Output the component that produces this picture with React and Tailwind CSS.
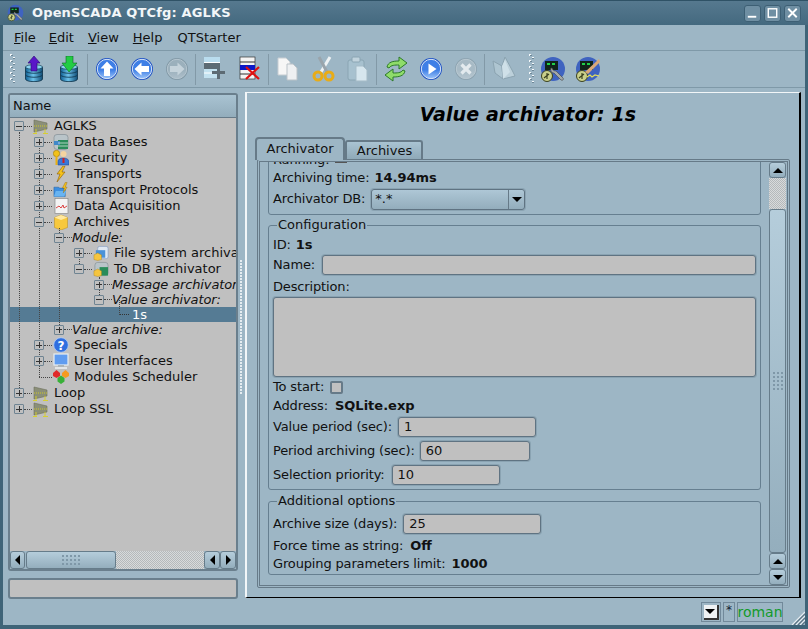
import React from "react";

const Grip = ({ cls = "" }) => (
  <svg width="6" height="30" viewBox="0 0 6 30" className={cls}>
    {Array.from({ length: 10 }).map((_, i) => (
      <g key={i}>
        <rect x={i % 2 ? 3 : 0} y={i * 3} width="2" height="2" fill="#f4f8fa" />
        <rect x={i % 2 ? 3 : 1} y={i * 3 + 1} width="2" height="1" fill="#6d8797" />
      </g>
    ))}
  </svg>
);

const Db = ({ id, top, children }) => (
  <svg width="20" height="26" viewBox="0 0 20 26">
    <defs>
      <linearGradient id={id} x1="0" x2="1" y1="0" y2="0">
        <stop offset="0" stopColor="#0f5f92" />
        <stop offset="0.45" stopColor="#6cc2ea" />
        <stop offset="1" stopColor="#104e78" />
      </linearGradient>
    </defs>
    <path d={`M1.5 ${top}v${23 - top}c0 3.5 17 3.5 17 0V${top}z`} fill={`url(#${id})`} stroke="#0d3147" strokeWidth="0.8" />
    <path d={`M1.5 ${top + 4}c2 3 15 3 17 0M1.5 ${top + 8}c2 3 15 3 17 0`} fill="none" stroke="#0d3147" strokeWidth="0.8" />
    <path d={`M1.5 ${top}c0-3 17-3 17 0s-17 3-17 0z`} fill="#8ad2f0" stroke="#0d3147" strokeWidth="0.6" />
    {children}
  </svg>
);

const Round = ({ id, c0 = "#9cc4f8", c1 = "#3f7fe6", c2 = "#1f52c4", ring = "#d8e6f8", children }) => (
  <svg width="24" height="24" viewBox="0 0 24 24">
    <defs>
      <linearGradient id={id} x1="0" x2="0" y1="0" y2="1">
        <stop offset="0" stopColor={c1} />
        <stop offset="0.55" stopColor={c1} />
        <stop offset="1" stopColor={c0} />
      </linearGradient>
    </defs>
    <circle cx="12" cy="12" r="11" fill={c2} />
    <circle cx="12" cy="12" r="9.7" fill={`url(#${id})`} stroke={ring} strokeWidth="1" />
    {children}
  </svg>
);

const Logo = ({ pencil, size = 26 }) => (
  <svg width={size} height={size + 1} viewBox="0 0 26 27">
    <circle cx="13" cy="13" r="12" fill="#3f63c0" />
    <rect x="5" y="5" width="13" height="9" fill="#10241a" />
    <path d="M7 7h3v2H7zM12 7h3v2h-3z" fill="#1fd04a" />
    <circle cx="7" cy="20" r="5.5" fill="#c9cf8a" stroke="#39401f" />
    <path d="M4 22l5-4M7 17v6" stroke="#39401f" strokeWidth="1.2" />
    {pencil ? (
      <>
        <path d="M10 16L24 3l1 3-12 12z" fill="#d9a878" />
        <path d="M12 21l3-2 2 2 3-2 4 1" stroke="#e6e05a" strokeWidth="1.2" fill="none" />
      </>
    ) : (
      <path d="M12 12c1 3 3 3 4 3l7 7c1 1 0 3-2 2l-7-7c-2 0-4-2-3-5z" fill="#a4a8a8" stroke="#444" strokeWidth="0.6" />
    )}
  </svg>
);

const toolbarGroups = [
  [
    <Db id="dba" top={11}><path d="M10 0l6 7h-3v8H7V7H4z" fill="#5a16c8" stroke="#2a0a70" strokeWidth="0.6" /></Db>,
    <Db id="dbb" top={11}><path d="M10 16L3 7h4V0h7v7h4z" fill="#22cc44" stroke="#0f6a25" strokeWidth="0.6" /></Db>,
  ],
  [
    <Round id="r1"><path d="M12 4.5l6.5 7H15v7.5H9v-7.5H5.5z" fill="#fff" /></Round>,
    <Round id="r2"><path d="M4.5 12l7-6.5V9H19v6h-7.5v3.5z" fill="#fff" /></Round>,
    <Round id="r3" c0="#aebfca" c1="#9bb0bc" c2="#8299a6" ring="#b5c6d0"><path d="M19.5 12l-7-6.5V9H5v6h7.5v3.5z" fill="#c5d3db" /></Round>,
  ],
  [
    <svg width="22" height="26" viewBox="0 0 22 26">
      <rect x="0" y="1" width="16" height="5" fill="#b9dcee" />
      <rect x="0" y="6" width="16" height="1" fill="#fff" />
      <rect x="0" y="7" width="16" height="6" fill="#5d6b74" />
      <rect x="0" y="13" width="16" height="9" fill="#c3e2f0" />
      <path d="M0 17h16" stroke="#fff" />
      <path d="M8 15h13v3H8z" fill="#5d6b74" />
      <path d="M13 10h3v13h-3z" fill="#5d6b74" />
    </svg>,
    <svg width="22" height="26" viewBox="0 0 22 26">
      <rect x="1" y="1" width="15" height="22" fill="#f4f4f4" stroke="#333" strokeWidth="0.7" />
      <path d="M1 6h15" stroke="#333" />
      <rect x="1" y="9" width="15" height="5" fill="#0b18c8" />
      <path d="M1 18h15" stroke="#333" />
      <path d="M7 11l13 12M20 11L7 23" stroke="#e01010" strokeWidth="2.2" />
    </svg>,
  ],
  [
    <svg width="24" height="26" viewBox="0 0 24 26">
      <path d="M2 2h8l4 4v13H2z" fill="#f6f6f6" stroke="#c6cdd2" />
      <path d="M11 8h6l4 4v12H11z" fill="#eef0f2" stroke="#bac2c8" />
    </svg>,
    <svg width="24" height="28" viewBox="0 0 24 28">
      <path d="M19 2L10 17" stroke="#eef2f4" strokeWidth="3" />
      <path d="M8 2l8 15" stroke="#9aa4ab" strokeWidth="3" />
      <circle cx="7" cy="21" r="4" fill="none" stroke="#e8ac18" strokeWidth="3" />
      <circle cx="18" cy="21" r="4" fill="none" stroke="#e8ac18" strokeWidth="3" />
    </svg>,
    <svg width="24" height="28" viewBox="0 0 24 28">
      <rect x="2" y="5" width="16" height="20" rx="2" fill="#a7c1cf" stroke="#8aa5b3" />
      <rect x="6" y="2" width="8" height="5" rx="1" fill="#c1d3dd" stroke="#8aa5b3" />
      <path d="M10 11h7l4 4v11H10z" fill="#d6e6ee" stroke="#a5bbc7" />
    </svg>,
  ],
  [
    <svg width="28" height="28" viewBox="0 0 28 28">
      <path d="M5 12c1-5 6-6 12-6V2l8 6-8 6v-4c-4 0-8 0-10 3z" fill="#8fdc6a" stroke="#2d7a2a" />
      <path d="M23 16c-1 5-6 6-12 6v4l-8-6 8-6v4c4 0 8 0 10-3z" fill="#8fdc6a" stroke="#2d7a2a" />
    </svg>,
    <Round id="r4"><path d="M9.5 6.5l8 5.5-8 5.5z" fill="#fff" /></Round>,
    <Round id="r5" c0="#b6c6d0" c1="#a7bac5" c2="#8da3b0" ring="#b9c9d2"><path d="M7.5 7.5l9 9M16.5 7.5l-9 9" stroke="#e3eaee" strokeWidth="3.2" /></Round>,
  ],
  [
    <svg width="26" height="26" viewBox="0 0 26 26">
      <path d="M2 5l9 5 1 13-8-6z" fill="#aec5d1" stroke="#8ba3b0" />
      <path d="M11 10l3-9 7 13 3 6-12 3z" fill="#bcd0da" stroke="#8ba3b0" />
      <path d="M11 10l3-6 5 12-7 7z" fill="#cfe0e8" />
    </svg>,
  ],
];

function Btn({ children }) {
  return <div className="flex h-[36px] w-[35px] shrink-0 items-center justify-center">{children}</div>;
}

function Toolbar() {
  return (
    <div className="flex h-[38px] items-center border-y border-[#7f99a8] pl-[7px]">
      <Grip cls="shrink-0" />
      {toolbarGroups.map((g, i) => (
        <React.Fragment key={i}>
          {g.map((ic, j) => (
            <Btn key={j}>{ic}</Btn>
          ))}
          {i < toolbarGroups.length - 1 && <div className="mx-px h-[31px] w-px shrink-0 bg-[#8299a7]" />}
        </React.Fragment>
      ))}
      <Grip cls="ml-[8px] shrink-0" />
      <Btn><Logo /></Btn>
      <Btn><Logo pencil /></Btn>
    </div>
  );
}

const small = {
  chip: (
    <svg width="16" height="16" viewBox="0 0 16 16">
      <path d="M1 2l13 3v6L1 14z" fill="#8b8f78" stroke="#6d705c" strokeWidth="0.6" />
      <path d="M1 8h14" stroke="#d8d020" strokeWidth="0.9" strokeDasharray="1 1" />
      <path d="M0 15.5h4M10 15.5h5M3 11v4M12 11v4" stroke="#d8d020" strokeWidth="0.9" />
    </svg>
  ),
  db: (
    <svg width="16" height="16" viewBox="0 0 16 16">
      <rect x="1" y="0.5" width="14" height="15" rx="3" fill="#b9c4c9" stroke="#7b878d" strokeWidth="0.6" />
      <rect x="5" y="6" width="10" height="9" fill="#2a8c5a" />
      <rect x="1" y="7" width="6" height="4" fill="#3f88c8" />
      <path d="M5 9h10M5 12h10" stroke="#e6f0ec" strokeWidth="0.7" />
    </svg>
  ),
  sec: (
    <svg width="16" height="16" viewBox="0 0 16 16">
      <circle cx="3.5" cy="3.5" r="3.2" fill="#f2c11a" stroke="#8a6a08" strokeWidth="0.5" />
      <path d="M2.5 6v9h2V6z" fill="#e8b010" />
      <circle cx="10.5" cy="4" r="3" fill="#f4d4a0" />
      <path d="M5 15v-3c0-3 2-4 5-4s6 1 6 4v3z" fill="#3878d8" stroke="#1c3c80" strokeWidth="0.5" />
      <path d="M9.5 8h2v5h-2z" fill="#d02020" />
    </svg>
  ),
  bolt: (
    <svg width="16" height="16" viewBox="0 0 16 16">
      <path d="M10 0L4 8h3l-3 8 8-10H9l3-6z" fill="#f5c21b" stroke="#8a5a08" strokeWidth="0.6" />
    </svg>
  ),
  folder: (
    <svg width="17" height="16" viewBox="0 0 17 16">
      <path d="M1 5h5l1 1h6v9H1z" fill="#3d8fe0" stroke="#1b5a9c" strokeWidth="0.5" />
      <path d="M1 15l2-6h11l-2 6z" fill="#68b4f2" />
      <path d="M13 0l-3 6h2l-1 5 4-6h-2l2-5z" fill="#f5c21b" stroke="#8a5a08" strokeWidth="0.4" />
    </svg>
  ),
  chart: (
    <svg width="15" height="16" viewBox="0 0 15 16">
      <rect x="1" y="0.5" width="13" height="15" fill="#f3f3f3" stroke="#8a8a8a" strokeWidth="0.7" />
      <path d="M2 10l3-2 2 2 2-3 1 3 3-2" fill="none" stroke="#d83030" strokeWidth="0.9" />
    </svg>
  ),
  box: (
    <svg width="16" height="16" viewBox="0 0 16 16">
      <path d="M1.5 3.5L8 1l6.5 2.5v10L8 16l-6.5-2.5z" fill="#f7c83c" stroke="#b68a18" strokeWidth="0.5" />
      <path d="M1.5 3.5L8 6l6.5-2.5L8 1z" fill="#ffe8a0" />
    </svg>
  ),
  file: (
    <svg width="17" height="16" viewBox="0 0 17 16">
      <rect x="5" y="1" width="11" height="13" rx="2" fill="#dfe8f2" stroke="#6a8cc0" strokeWidth="0.5" />
      <rect x="3" y="5" width="10" height="8" fill="#4a92d8" />
      <path d="M1 10l4-2 4 2v5l-4 1-4-1z" fill="#f5c540" stroke="#a87d14" strokeWidth="0.4" />
    </svg>
  ),
  toDb: (
    <svg width="17" height="16" viewBox="0 0 17 16">
      <rect x="2" y="1" width="14" height="14" rx="3" fill="#b9c4c9" stroke="#7b878d" strokeWidth="0.6" />
      <rect x="7" y="6" width="9" height="9" fill="#2a8c5a" />
      <path d="M1 10l4-2 4 2v5l-4 1-4-1z" fill="#f5c540" stroke="#a87d14" strokeWidth="0.4" />
    </svg>
  ),
  help: (
    <svg width="16" height="16" viewBox="0 0 16 16">
      <circle cx="8" cy="8" r="7.3" fill="#2f6fe0" stroke="#b8d0f5" strokeWidth="0.8" />
      <text x="8" y="12.5" textAnchor="middle" fontSize="12" fontWeight="700" fill="#fff" fontFamily="DejaVu Sans">?</text>
    </svg>
  ),
  ui: (
    <svg width="16" height="17" viewBox="0 0 16 17">
      <rect x="1" y="1" width="14" height="11" fill="#5f9cf0" stroke="#e8eef2" strokeWidth="1.2" />
      <rect x="5" y="12" width="6" height="2" fill="#aab4ba" />
      <rect x="2" y="14" width="12" height="2" fill="#e3e6e8" />
    </svg>
  ),
  sched: (
    <svg width="16" height="14" viewBox="0 0 16 14">
      <path d="M0 3l3.5-3L7 3v3L3.5 8 0 6z" fill="#e02a2a" />
      <path d="M9 3l3.5-3L16 3v3l-3.5 2L9 6z" fill="#f59a20" />
      <path d="M4.5 8L8 5.5 11.5 8v3.5L8 14l-3.500-2.500z" fill="#38b038" />
    </svg>
  ),
};

const rows = [
  { box: "-", pad: "pl-[4px]", h: "h-[16px]", icon: small.chip, t: "AGLKS" },
  { box: "+", pad: "pl-[24px]", h: "h-[16px]", icon: small.db, t: "Data Bases" },
  { box: "+", pad: "pl-[24px]", h: "h-[16px]", icon: small.sec, t: "Security" },
  { box: "+", pad: "pl-[24px]", h: "h-[16px]", icon: small.bolt, t: "Transports" },
  { box: "+", pad: "pl-[24px]", h: "h-[16px]", icon: small.folder, t: "Transport Protocols" },
  { box: "+", pad: "pl-[24px]", h: "h-[16px]", icon: small.chart, t: "Data Acquisition" },
  { box: "-", pad: "pl-[24px]", h: "h-[16px]", icon: small.box, t: "Archives" },
  { box: "-", pad: "pl-[44px]", h: "h-[15px]", t: "Module:", it: true },
  { box: "+", pad: "pl-[64px]", h: "h-[16px]", icon: small.file, t: "File system archivator" },
  { box: "-", pad: "pl-[64px]", h: "h-[16px]", icon: small.toDb, t: "To DB archivator" },
  { box: "+", pad: "pl-[84px]", h: "h-[15px]", t: "Message archivator:", it: true },
  { box: "-", pad: "pl-[84px]", h: "h-[15px]", t: "Value archivator:", it: true },
  { box: "", pad: "pl-[104px]", h: "h-[15px]", t: "1s", sel: true },
  { box: "+", pad: "pl-[44px]", h: "h-[15px]", t: "Value archive:", it: true },
  { box: "+", pad: "pl-[24px]", h: "h-[16px]", icon: small.help, t: "Specials" },
  { box: "+", pad: "pl-[24px]", h: "h-[16px]", icon: small.ui, t: "User Interfaces" },
  { box: "", pad: "pl-[24px]", h: "h-[16px]", icon: small.sched, t: "Modules Scheduler" },
  { box: "+", pad: "pl-[4px]", h: "h-[16px]", icon: small.chip, t: "Loop" },
  { box: "+", pad: "pl-[4px]", h: "h-[16px]", icon: small.chip, t: "Loop SSL" },
];

function Expander({ kind }) {
  return (
    <div className="relative z-10 flex h-[10px] w-[10px] shrink-0 items-center justify-center rounded-[1px] border border-[#6f8492] bg-[#c0c0c0]">
      <div className="absolute h-px w-[6px] bg-[#333]" />
      {kind === "+" && <div className="absolute h-[6px] w-px bg-[#333]" />}
    </div>
  );
}

function TreeRow({ r }) {
  return (
    <div className={`flex items-center whitespace-nowrap ${r.h} ${r.pad} ${r.sel ? "bg-[#557b94] text-white" : "text-[#111]"}`}>
      {r.box ? <Expander kind={r.box} /> : <div className="w-[10px] shrink-0" />}
      {r.sel ? (
        <div className="ml-[-5px] mr-[3px] h-0 w-[10px] shrink-0 border-t border-dotted border-[#333]" />
      ) : (
        <div className={`${r.box ? "w-[8px]" : "ml-[-5px] w-[13px]"} h-0 shrink-0 border-t border-dotted border-[#444]`} />
      )}
      {r.icon && <div className="ml-px mr-[5px] flex w-[16px] shrink-0 justify-center">{r.icon}</div>}
      <span className={r.it ? "italic tracking-[-0.12px]" : ""}>{r.t}</span>
    </div>
  );
}

const Guide = ({ cls }) => <div className={`absolute w-0 border-l border-dotted border-[#444] ${cls}`} />;

const ArrowL = () => <div className="h-0 w-0 border-y-[5px] border-r-[5px] border-y-transparent border-r-black" />;
const ArrowR = () => <div className="h-0 w-0 border-y-[5px] border-l-[5px] border-y-transparent border-l-black" />;
const ArrowU = () => <div className="h-0 w-0 border-x-[5px] border-b-[5px] border-x-transparent border-b-black" />;
const ArrowD = () => <div className="h-0 w-0 border-x-[5px] border-t-[5px] border-x-transparent border-t-black" />;

const sbBtn = "flex items-center justify-center rounded-[3px] border border-[#667c8a] bg-gradient-to-b from-[#b5cddb] to-[#94aebd]";
const dither = "bg-[repeating-conic-gradient(#b4b9bb_0_25%,#d8dadb_0_50%)] bg-[length:2px_2px]";

function Dots({ cols, rows: n }) {
  return (
    <div className="grid gap-[2px]" style={{ gridTemplateColumns: `repeat(${cols}, 2px)` }}>
      {Array.from({ length: cols * n }).map((_, i) => (
        <div key={i} className="h-[2px] w-[2px] bg-[#7f98a8]" />
      ))}
    </div>
  );
}

function LeftPanel() {
  return (
    <div className="flex w-[230px] shrink-0 flex-col">
      <div className="flex h-[478px] flex-col overflow-hidden rounded-[3px] border-2 border-[#6a7f8d] bg-[#c0c0c0]">
        <div className="flex h-[23px] shrink-0 items-center border-b border-[#667a88] bg-gradient-to-b from-[#a9c3d2] to-[#93adbc] pl-[3px] text-[#111]">
          Name
        </div>
        <div className="relative flex-1 overflow-hidden">
          <Guide cls="left-[9px] top-[14px] h-[260px]" />
          <Guide cls="left-[29px] top-[30px] h-[229px]" />
          <Guide cls="left-[49px] top-[110px] h-[101px]" />
          <Guide cls="left-[69px] top-[135px] h-[17px]" />
          <Guide cls="left-[89px] top-[159px] h-[22px]" />
          <Guide cls="left-[109px] top-[182px] h-[15px] z-10" />
          {rows.map((r, i) => (
            <TreeRow key={i} r={r} />
          ))}
        </div>
        <div className="flex h-[18px] shrink-0 items-stretch bg-[#9db6c5]">
          <div className={`${sbBtn} w-[15px]`}><ArrowL /></div>
          <div className={`${sbBtn} ml-px w-[90px]`}><Dots cols={5} rows={3} /></div>
          <div className={`flex-1 ${dither}`} />
          <div className={`${sbBtn} w-[16px]`}><ArrowL /></div>
          <div className={`${sbBtn} w-[16px]`}><ArrowR /></div>
        </div>
      </div>
      <div className="mt-[7px] h-[21px] rounded-[3px] border-2 border-[#6a7f8d] bg-[#c0c0c0]" />
    </div>
  );
}

const inputCls = "flex items-center rounded-[3px] border border-[#5f7382] shadow-[0_0_0_1px_#8aa3b2] bg-[#c0c0c0] pl-[5px] text-[#111] tracking-normal";
const L = ({ children, cls = "" }) => <div className={`flex h-[18px] items-center whitespace-nowrap ${cls}`}>{children}</div>;
const B = ({ cls, children }) => <b className={`tracking-normal ${cls}`}>{children}</b>;

function Field({ label, value, w, ml, cls = "" }) {
  return (
    <div className={`flex h-[20px] items-center whitespace-nowrap ${cls}`}>
      <span>{label}</span>
      <div className={`${inputCls} h-[20px] ${w} ${ml}`}>{value}</div>
    </div>
  );
}

function Group({ title, cls, children }) {
  return (
    <div className={`relative rounded-[3px] border border-[#667f90] px-[4px] ${cls}`}>
      <div className="absolute -top-[9px] left-[8px] flex h-[16px] items-center bg-[#9db6c5] px-px tracking-normal">{title}</div>
      {children}
    </div>
  );
}

function RightPanel() {
  return (
    <div className="ml-[7px] flex h-[506px] w-[556px] flex-col border-y border-x-2 border-t-[#f2f6f8] border-l-[#f2f6f8] border-b-black border-r-black">
      <div className="flex h-[43px] shrink-0 items-center justify-center pl-[10px] text-[19px] font-bold italic tracking-[0.1px] text-black">Value archivator: 1s</div>
      <div className="relative z-10 flex h-[23px] shrink-0 items-end pl-[8px]">
        <div className="-mb-px flex h-[23px] w-[90px] items-center justify-center rounded-t-[4px] border-x-2 border-t-2 border-[#667a88] bg-[#9db6c5] pb-[2px]">Archivator</div>
        <div className="flex h-[19px] w-[78px] items-center justify-center rounded-t-[3px] border-x-2 border-t-2 border-[#667a88] bg-gradient-to-b from-[#a9c3d2] to-[#8fa9b8] pl-px">Archives</div>
      </div>
      <div className="ml-[10px] flex h-[429px] w-[533px] rounded-[2px] border-[3px] border-double border-[#667a88]">
        <div className="flex min-w-0 flex-1 flex-col overflow-hidden pl-[8px] tracking-[-0.15px] text-[#111]">
          <div className="-mt-[12px] h-[65px] w-[493px] shrink-0 rounded-[3px] border border-[#667f90] px-[4px]">
            <div className="flex h-[18px] items-center whitespace-nowrap">
              Running:
              <svg width="12" height="6" viewBox="0 0 12 6" className="ml-[6px]">
                <rect width="12" height="6" fill="#555" />
                <path d="M1 2h1v1H1zM4 2h1v1H4zM7 2h1v1H7zM10 2h1v1h-1zM2 4h1v1H2zM5 4h1v1H5zM8 4h1v1H8z" fill="#eee" />
              </svg>
            </div>
            <L>
              Archiving time:<B cls="ml-[5px]">14.94ms</B>
            </L>
            <div className="mt-[1px] flex h-[22px] items-center whitespace-nowrap">
              <span>Archivator DB:</span>
              <div className="ml-[6px] flex h-[21px] w-[154px] items-stretch rounded-[3px] border border-[#5f7382] bg-gradient-to-b from-[#aec7d6] to-[#93adbc] tracking-normal shadow-[0_0_0_1px_#8aa3b2]">
                <div className="flex flex-1 items-center pl-[3px]">*.*</div>
                <div className="flex w-[16px] items-center justify-center border-l border-[#667a88]"><ArrowD /></div>
              </div>
            </div>
          </div>

          <Group title="Configuration" cls="mt-[10px] h-[265px] w-[493px] shrink-0 pt-[10px]">
            <L>
              ID:<B cls="ml-[5px]">1s</B>
            </L>
            <Field cls="mt-[1px]" label="Name:" value="" w="w-[434px]" ml="ml-[7px]" />
            <L cls="mt-[3px]">Description:</L>
            <div className={`${inputCls} mt-[1px] h-[80px] w-[483px]`} />
            <div className="mt-[1px] flex h-[18px] items-center whitespace-nowrap">
              To start:
              <div className="ml-[6px] h-[13px] w-[13px] rounded-[2px] border-2 border-[#667a88] bg-[#c0c0c0]" />
            </div>
            <L cls="mt-[1px]">
              Address:<B cls="ml-[7px]">SQLite.exp</B>
            </L>
            <Field cls="mt-[2px]" label="Value period (sec):" value="1" w="w-[138px]" ml="ml-[6px]" />
            <Field cls="mt-[4px]" label="Period archiving (sec):" value="60" w="w-[110px]" ml="ml-[5px]" />
            <Field cls="mt-[4px]" label="Selection priority:" value="10" w="w-[108px]" ml="ml-[7px]" />
          </Group>

          <Group title="Additional options" cls="mt-[11px] h-[74px] w-[493px] shrink-0 pt-[12px]">
            <Field label="Archive size (days):" value="25" w="w-[138px]" ml="ml-[6px]" />
            <L cls="mt-[3px]">
              Force time as string:<B cls="ml-[7px]">Off</B>
            </L>
            <L>
              Grouping parameters limit:<B cls="ml-[6px]">1000</B>
            </L>
          </Group>
        </div>

        <div className="mr-[1px] flex w-[17px] shrink-0 flex-col">
          <div className={`${sbBtn} h-[16px] shrink-0`}><ArrowU /></div>
          <div className={`h-[31px] shrink-0 ${dither}`} />
          <div className={`${sbBtn} flex-1`}><Dots cols={3} rows={5} /></div>
          <div className={`${sbBtn} h-[16px] shrink-0`}><ArrowU /></div>
          <div className={`${sbBtn} h-[16px] shrink-0`}><ArrowD /></div>
        </div>
      </div>
    </div>
  );
}

function StatusBar() {
  return (
    <div className="relative flex h-[26px] items-center justify-end gap-[2px] pr-[22px]">
      <div className="flex h-[20px] w-[20px] items-center justify-center border border-[#71899a]">
        <div className="flex h-[15px] w-[15px] items-center justify-center border-b-2 border-r-2 border-b-[#333] border-r-[#333] bg-[#eef1f3]"><ArrowD /></div>
      </div>
      <div className="flex h-[20px] w-[12px] items-start justify-center border border-[#71899a] text-[12px] leading-[14px] text-[#123]">*</div>
      <div className="flex h-[20px] w-[46px] items-center justify-center border border-[#71899a] pt-px text-[14px] text-[#129a2a]">roman</div>
      <svg width="14" height="14" viewBox="0 0 14 14" className="absolute bottom-0 right-0">
        <path d="M14 1L1 14M14 5L5 14M14 9L9 14" stroke="#e8eef2" strokeWidth="1.2" />
        <path d="M14 3L3 14M14 7L7 14M14 11L11 14" stroke="#5c7484" strokeWidth="1.2" />
      </svg>
    </div>
  );
}

export default function App() {
  return (
    <div className="flex h-[629px] w-[808px] flex-col overflow-hidden bg-[#9db6c5] text-[13px] text-[#111] [font-family:'DejaVu_Sans',sans-serif]">
      <div className="flex h-[25px] shrink-0 items-center border-t border-[#2f5266] bg-gradient-to-b from-[#56798f] to-[#44697f] pl-[7px] pr-[7px]">
        <Logo size={17} />
        <span className="ml-[8px] flex-1 text-[13px] font-semibold tracking-[0.15px] text-[#f2f6f8]">OpenSCADA QTCfg: AGLKS</span>
        <div className="flex gap-[3px]">
          {[
            <path d="M3 12h9" stroke="#fff" strokeWidth="2" />,
            <rect x="3.5" y="3.5" width="9" height="9" fill="none" stroke="#fff" strokeWidth="1.5" />,
            <path d="M3.5 3.5l9 9M12.5 3.5l-9 9" stroke="#fff" strokeWidth="2" />,
          ].map((p, i) => (
            <div key={i} className="flex h-[17px] w-[17px] items-center justify-center rounded-[3px] border border-[#3d5f74] bg-[#6f8fa3]">
              <svg width="16" height="16" viewBox="0 0 16 16">{p}</svg>
            </div>
          ))}
        </div>
      </div>
      <div className="flex min-h-0 flex-1 flex-col border-x-[3px] border-b-[4px] border-x-[#3f6478] border-b-[#3f6478]">
        <div className="flex h-[25px] shrink-0 items-center text-[#111]">
          <span className="ml-[11px]"><u>F</u>ile</span>
          <span className="ml-[13px]"><u>E</u>dit</span>
          <span className="ml-[14px]"><u>V</u>iew</span>
          <span className="ml-[14px]"><u>H</u>elp</span>
          <span className="ml-[15px]">QTStarter</span>
        </div>
        <Toolbar />
        <div className="flex flex-1 pl-[5px] pt-[4px]">
          <div className="flex items-start">
            <div className="mt-[1px]"><LeftPanel /></div>
          </div>
          <div className="relative flex items-start">
            <RightPanel />
            <div className="absolute left-[2px] top-[168px] grid grid-cols-1 gap-[1px]">
              {Array.from({ length: 45 }).map((_, i) => (
                <div key={i} className="h-[2px] w-[2px] bg-[#e6edf1]" />
              ))}
            </div>
          </div>
        </div>
        <StatusBar />
      </div>
    </div>
  );
}
